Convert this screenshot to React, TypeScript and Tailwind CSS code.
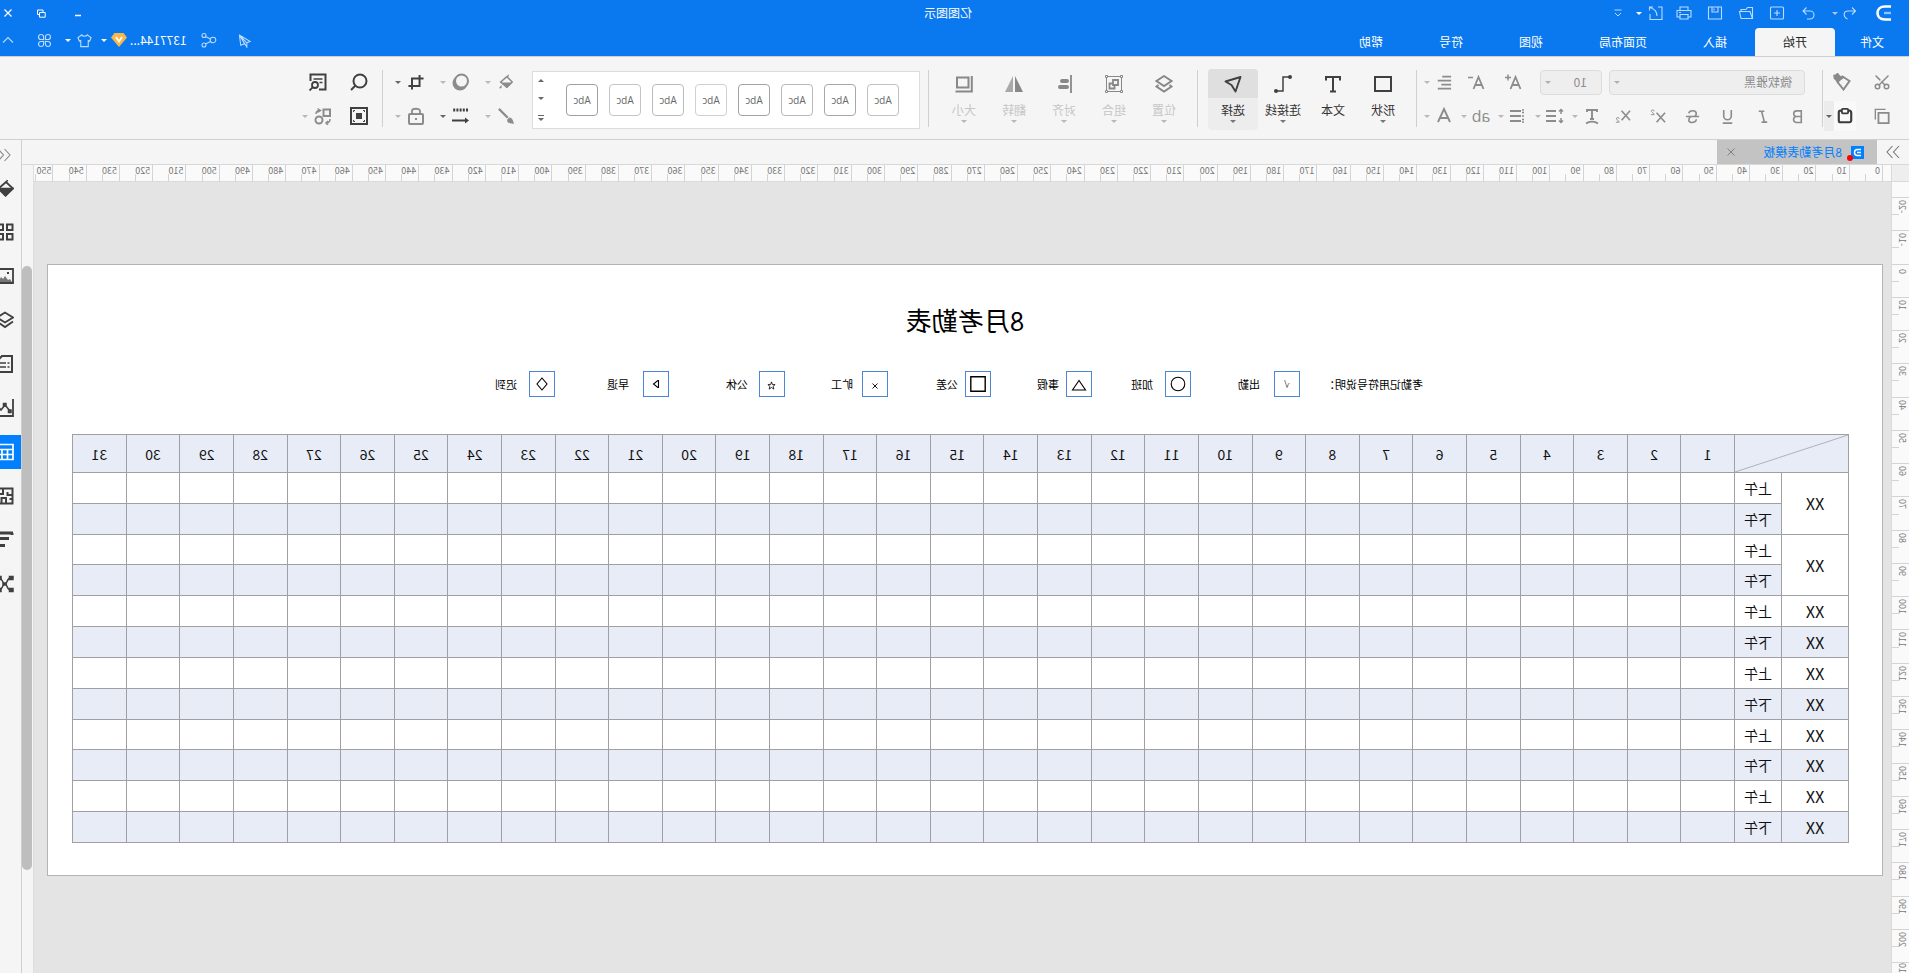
import type { ReactNode } from 'react';
import { Scissors } from 'lucide-react';

interface IconProps {
  children: ReactNode;
  className?: string;
  box?: number;
}

function Icon({ children, className = 'size-[18px]', box = 18 }: IconProps) {
  return (
    <svg
      viewBox={`0 0 ${box} ${box}`}
      className={`shrink-0 ${className}`}
      fill="none"
      stroke="currentColor"
      strokeWidth="1.5"
      aria-hidden="true"
    >
      {children}
    </svg>
  );
}

function Caret({ className = 'w-2 text-[#b4b4b4]', up = false }: { className?: string; up?: boolean }) {
  return (
    <span className={`flex shrink-0 items-center justify-center ${className}`}>
      <svg viewBox="0 0 6 3" className="h-[3px] w-[6px]" fill="currentColor" aria-hidden="true">
        <path d={up ? 'M0 3h6L3 0z' : 'M0 0h6L3 3z'} />
      </svg>
    </span>
  );
}

function ToolButton({ label, className, children }: { label: string; className: string; children: ReactNode }) {
  return (
    <button type="button" aria-label={label} className={`flex shrink-0 items-center justify-center ${className}`}>
      {children}
    </button>
  );
}

function Separator({ className = '' }: { className?: string }) {
  return <div className={`mt-[5px] h-[57px] w-px shrink-0 bg-[#cfcfcf] ${className}`} />;
}

/* ---------- Title bar ---------- */

const quickActions = [
  { label: '重做', icon: <path d="M9.5 2.500 13 6l-3.500 3.500M13 6H6a4 4 0 0 0 0 8h3" /> },
  { label: '新建', icon: <><rect x="1.500" y="2" width="13" height="12" rx="1" /><path d="M8 5v6M5 8h6" /></> },
  { label: '打开', icon: <><path d="M1.500 13.500v-11h5l1.500 2h5v2" /><path d="M1.500 13.500h11.500l1.500-7H4z" /></> },
  { label: '保存', icon: <><path d="M1.500 2h13v12h-13z" /><path d="M5 2v5h6V2M9 3.500v2" /></> },
  { label: '打印', icon: <><path d="M4 5V2h8v3M4 12H1V5.500h14V12h-3" /><path d="M4 9.500h8V14H4zM11 7.500h2" /></> },
];

function TitleBar() {
  return (
    <div className="flex h-7 items-center pb-0.5 text-xs">
      <div className="flex flex-1 items-center pl-[17px] text-[#b9dbff]">
        <svg viewBox="0 0 16 16" className="size-4" fill="none" aria-hidden="true">
          <path d="M1 1.500h6c10 0 10 13 0 13H1" stroke="#fff" strokeWidth="2.600" />
          <path d="M1 8h7" stroke="#8cc4ff" strokeWidth="2.400" />
        </svg>
        <ToolButton label="撤销" className="ml-[15px] w-[22px]">
          <Icon box={16} className="size-4">
            <g strokeWidth="1.100"><path d="M6 2.500 2.500 6 6 9.500M2.500 6h7.500c5 0 5 6 .5 8" /></g>
          </Icon>
        </ToolButton>
        <Caret className="mr-[7px] w-2 text-[#b8c4d0]" />
        {quickActions.map((action) => (
          <ToolButton key={action.label} label={action.label} className="w-[31px]">
            <Icon box={16} className="size-4"><g strokeWidth="1.100">{action.icon}</g></Icon>
          </ToolButton>
        ))}
        <ToolButton label="导出" className="w-[26px]">
          <Icon box={16} className="size-4">
            <g strokeWidth="1.100"><path d="M6 2H2v12.500h12V9" /><path d="M11 2h3.500v3.500M14 2.500C9 4 7 7 7 11" /></g>
          </Icon>
        </ToolButton>
        <Caret className="w-2 text-white" />
        <ToolButton label="更多" className="ml-2 w-[18px]">
          <Icon box={8} className="size-2"><g strokeWidth="1"><path d="M.5 1h7M1 4l3 3 3-3" /></g></Icon>
        </ToolButton>
      </div>
      <h1 className="pr-1 text-white">亿图图示</h1>
      <div className="flex flex-1 items-center justify-end text-white">
        <ToolButton label="最小化" className="w-9"><Icon box={8} className="size-2"><path d="M1 6.500h6" /></Icon></ToolButton>
        <ToolButton label="还原" className="w-9">
          <Icon box={9} className="size-[9px]"><path d="M3 3V1h5.500v4.500h-2M.8 3.500h5.700v4.700H.8z" strokeWidth="1" /></Icon>
        </ToolButton>
        <ToolButton label="关闭" className="ml-2 w-4"><Icon box={8} className="size-2"><path d="m.5.5 7 7M7.500.5l-7 7" strokeWidth="1.200" /></Icon></ToolButton>
      </div>
    </div>
  );
}

const menuTabs = ['插入', '页面布局', '视图', '符号', '帮助'];

function MenuBar() {
  return (
    <nav className="flex h-7 text-xs text-white">
      <button type="button" className="w-[74px]">文件</button>
      <button type="button" className="rounded-t-sm bg-[#f5f5f5] px-7 text-[#222]">开始</button>
      {menuTabs.map((tab) => (
        <button key={tab} type="button" className="px-7">{tab}</button>
      ))}
      <div className="ml-auto flex items-center pb-1 text-[#b9dbff]">
        <ToolButton label="发送" className="mr-4 w-5">
          <Icon box={16} className="size-[15px]"><g strokeWidth="1.100"><path d="M13.500 2 2 9l3.500 1.500zM13.500 2 12 13l-4-1.500zM5.500 10.500V15L13.500 2" /></g></Icon>
        </ToolButton>
        <ToolButton label="分享" className="mr-3 w-5">
          <Icon box={16} className="size-4">
            <g strokeWidth="1.100"><circle cx="4" cy="8" r="2.800" /><circle cx="13" cy="3.500" r="2" /><circle cx="13" cy="13" r="2" /><path d="m6.500 7 5-2.500M6.500 9.500l5 2.500" /></g>
          </Icon>
        </ToolButton>
        <button type="button" className="mr-[3px] text-white">1377144...</button>
        <svg viewBox="0 0 16 14" className="mr-[3px] h-3.5 w-4" aria-hidden="true">
          <path d="M3.500 0h9L16 4.500 8 14 0 4.500z" fill="#f9b84a" />
          <path d="m5 4 3 4.500L11 4" fill="none" stroke="#fff" strokeWidth="1.800" />
        </svg>
        <Caret className="mr-[5px] w-2 text-white" />
        <ToolButton label="皮肤" className="mr-[3px] w-5">
          <Icon box={16} className="size-[15px]"><g strokeWidth="1.200"><path d="M5 2 1 5l1.500 3.500L4 8v6.500h8V8l1.500.5L15 5l-4-3c-1 2-5 2-6 0z" /></g></Icon>
        </ToolButton>
        <Caret className="mr-[9px] w-2 text-white" />
        <ToolButton label="应用" className="mr-[19px] w-5">
          <Icon box={16} className="size-[15px]">
            <g strokeWidth="1.200">
              <path d="M7 7V4a2.700 2.700 0 1 0-2.700 3zM9 7V4a2.700 2.700 0 1 1 2.700 3zM7 9v3a2.700 2.700 0 1 1-2.700-3zM9 9v3a2.700 2.700 0 1 0 2.700-3z" />
            </g>
          </Icon>
        </ToolButton>
        <ToolButton label="收起" className="w-4"><Icon box={12} className="size-3"><g strokeWidth="1.100"><path d="m1 8.500 5-5 5 5" /></g></Icon></ToolButton>
      </div>
    </nav>
  );
}

/* ---------- Ribbon ---------- */

const textTools = [
  { label: '粗体', icon: <path d="M5 3h5a3 3 0 0 1 0 6H5zM5 9h5.500a3.200 3.200 0 0 1 0 6.300H5z" /> },
  { label: '斜体', icon: <path d="M7 3.500h6M4 15h6M10 3.500 7 15" /> },
  { label: '下划线', icon: <path d="M5 2v6.500a4 4 0 0 0 8 0V2M4 16h10" /> },
  { label: '删除线', icon: <path d="M13 5.500C12 2 5 2 5 6c0 1.500 1 2.500 2 3M2 9h14M5 12c0 4 8 4.500 8 1 0-2-1-3-2-4" /> },
  { label: '上标', icon: <><path d="m1 5 9 10M10 5 1 15" /><path d="M12.500 3.500c0-2 3-2 3 0 0 1-3 2-3 3.500h3.500" strokeWidth="1" /></> },
  { label: '下标', icon: <><path d="m1 3 9 10M10 3 1 13" /><path d="M12.500 11.500c0-2 3-2 3 0 0 1-3 2-3 3.500h3.500" strokeWidth="1" /></> },
];

const splitTextTools = [
  { label: '文字效果', icon: <><path d="M4 5V3h10v2M9 3v9M7 12h4" strokeWidth="1.900" /><path d="M3 16.500c3-2.500 9-2.500 12 0" strokeWidth="1.800" /></> },
  { label: '行距', icon: <><path d="M8 4h10M8 9h10M8 14h10" strokeWidth="2" /><path d="M3 2v5M3 11v5M1 4.500 3 2.500l2 2M1 13.500l2 2 2-2" /></> },
  { label: '项目符号', icon: <><path d="M6 4h11M6 9h11M6 14h11" strokeWidth="2" /><path d="M3 3h2M3 5.500h2M3 9h2M3 12.500h2M3 15h2" /></> },
];

function Split({ label, children, dark = false, wide = false }: { label: string; children: ReactNode; dark?: boolean; wide?: boolean }) {
  return (
    <div className={`flex shrink-0 items-center ${wide ? 'h-[34px]' : 'mr-[3px] h-[34px]'} ${dark ? 'text-[#404040]' : 'text-[#8c8c8c]'}`}>
      <ToolButton label={label} className={wide ? 'w-7' : 'w-[26px]'}>{children}</ToolButton>
      <Caret className={dark ? 'w-2 text-[#666]' : 'w-2 text-[#b8b8b8]'} />
    </div>
  );
}

function ClipboardGroup() {
  return (
    <div className="shrink-0 text-[#8a8a8a]">
      <div className="flex h-[34px] items-center pl-2">
        <ToolButton label="剪切" className="w-[38px]"><Scissors className="size-[18px] -rotate-90" /></ToolButton>
        <ToolButton label="格式刷" className="ml-1.5 w-[30px]">
          <Icon>
            <path d="m1.500 8 7-4.500 5 5.500-6 7.500z" strokeWidth="2" />
            <path d="m8.500 5 3.500-2.500 1.500-2 1.500 1.500 2 .5-.5 3-3 3z" fill="currentColor" />
          </Icon>
        </ToolButton>
      </div>
      <div className="flex h-[34px] items-center pl-2">
        <ToolButton label="复制" className="w-[38px]">
          <Icon className="size-4"><path d="M1.500 5.500H13V17H1.500z" strokeWidth="2" /><path d="M5 1.500h11.500V13" /></Icon>
        </ToolButton>
        <div className="ml-[7px] flex h-[30px] w-8 items-stretch bg-[#f9f9f9] text-[#3c3c3c]">
          <ToolButton label="粘贴" className="w-[22px]">
            <Icon className="size-4"><rect x="2" y="3" width="14" height="13" rx="2" strokeWidth="2.400" /><rect x="5.500" y="1" width="7" height="5" rx="1" fill="#f9f9f9" strokeWidth="2" /></Icon>
          </ToolButton>
          <Caret className="w-[10px] bg-[#ececec] text-[#666]" />
        </div>
      </div>
    </div>
  );
}

function FontGroup() {
  return (
    <div className="ml-[17px] shrink-0 text-[#8c8c8c]">
      <div className="flex h-[34px] items-center">
        <div className="relative">
          <select aria-label="字体" className="block h-[25px] w-[196px] appearance-none rounded-sm border border-[#dcdcdc] bg-[#eee] pl-3 text-xs text-[#8c8c8c]">
            <option>微软雅黑</option>
          </select>
          <Caret className="pointer-events-none absolute inset-y-0 right-1 w-2 text-[#b0b0b0]" />
        </div>
        <div className="relative ml-[7px]">
          <select aria-label="字号" className="block h-[25px] w-[62px] appearance-none rounded-sm border border-[#dcdcdc] bg-[#eee] pl-3.5 text-xs text-[#8c8c8c]">
            <option>10</option>
          </select>
          <Caret className="pointer-events-none absolute inset-y-0 right-1 w-2 text-[#b0b0b0]" />
        </div>
        <ToolButton label="增大字号" className="ml-[9px] w-9">
          <Icon><path d="m1.500 16 5-12 5 12M3.500 12h6" strokeWidth="1.800" /><path d="M11 4.500h6M14 1.500v6" /></Icon>
        </ToolButton>
        <ToolButton label="减小字号" className="w-[38px]">
          <Icon><path d="m1.500 16 5-12 5 12M3.500 12h6" strokeWidth="1.800" /><path d="M12 4.500h5" /></Icon>
        </ToolButton>
        <Split label="对齐方式">
          <Icon className="size-4"><path d="M1 3h10M1 7.500h15M1 12h11M1 16.500h15" strokeWidth="2" /></Icon>
        </Split>
      </div>
      <div className="-ml-[10px] flex h-[34px] items-center">
        {textTools.map((tool) => (
          <ToolButton key={tool.label} label={tool.label} className="w-[35px]">
            <Icon className="size-[17px]"><g strokeWidth="1.700">{tool.icon}</g></Icon>
          </ToolButton>
        ))}
        {splitTextTools.map((tool) => (
          <Split key={tool.label} label={tool.label}><Icon>{tool.icon}</Icon></Split>
        ))}
        <Split label="突出显示"><span className="font-['Open_Sans'] text-base">ab</span></Split>
        <Split label="字体颜色"><Icon><path d="m3 15 6-13 6 13M5.500 11h7" strokeWidth="1.900" /></Icon></Split>
      </div>
    </div>
  );
}

interface BigTool {
  label: string;
  icon: ReactNode;
  caret?: boolean;
  active?: boolean;
}

const drawTools: BigTool[] = [
  { label: '形状', caret: true, icon: <path d="M1 2h16v14H1z" strokeWidth="2" /> },
  { label: '文本', icon: <path d="M2 5.500V2h14v3.500M9 2v14M6 16.500h6" strokeWidth="2" /> },
  {
    label: '连接线',
    caret: true,
    icon: <><path d="M2 2h7v14h6" strokeWidth="1.500" /><circle cx="2" cy="2" r="2" fill="currentColor" stroke="none" /><circle cx="16" cy="16" r="2" fill="currentColor" stroke="none" /></>,
  },
  { label: '选择', caret: true, active: true, icon: <path d="m1.500 2 15 4.500-6 3.500-4 6.500z" strokeWidth="1.900" strokeLinejoin="round" /> },
];

const arrangeTools: BigTool[] = [
  { label: '位置', icon: <path d="m9 1 7.500 5L9 11 1.500 6zM3.500 10l-2 1.500L9 16.500l7.500-5-2-1.500" strokeWidth="1.900" /> },
  {
    label: '组合',
    icon: <><path d="M1.500 1.500h15v15h-15z" strokeWidth="1" /><path d="M5 5h5v5H5zM10.500 8.500h3v5h-5V11" strokeWidth="1.800" /><path d="M.5.5h2v2h-2zM15.500.5h2v2h-2zM.5 15.500h2v2h-2zM15.500 15.500h2v2h-2z" fill="#f5f5f5" strokeWidth="1" /></>,
  },
  { label: '对齐', icon: <><path d="M2 0v18" strokeWidth="1.800" /><path d="M6 6h5M6 12h7" strokeWidth="4" strokeLinecap="round" /></> },
  { label: '翻转', icon: <><path d="M8 1v16H0z" fill="currentColor" stroke="none" /><path d="M10 1v16h8z" fill="#a9a9a9" stroke="none" /></> },
  { label: '大小', icon: <path d="M4.500 2.500h11.500v10H4.500zM1.200 1v15.500h16.300" strokeWidth="2" /> },
];

function BigButton({ tool, muted = false }: { tool: BigTool; muted?: boolean }) {
  return (
    <button
      type="button"
      className={`mt-1 flex h-[61px] w-[50px] shrink-0 flex-col items-center text-xs ${muted ? 'text-[#c6c6c6]' : 'text-[#333]'} ${tool.active ? 'rounded-sm bg-[#ededed]' : ''}`}
    >
      <span
        className={`flex h-[29px] w-full items-center justify-center ${muted ? 'text-[#888]' : 'text-[#404040]'} ${tool.active ? 'rounded-t-sm bg-[#dfdfdf]' : ''}`}
      >
        <Icon>{tool.icon}</Icon>
      </span>
      <span className="mt-1 leading-4">{tool.label}</span>
      {tool.caret || muted ? <Caret className={muted ? 'h-1.5 w-2 text-[#b8b8b8]' : 'h-1.5 w-2 text-[#777]'} /> : null}
    </button>
  );
}

const themeStyles = [
  'border-[#c0c0c0]',
  'border-[#a8a8a8]',
  'border-[#b8b8b8]',
  'border-[#a4a4a4]',
  'border-[#d0d0d0]',
  'border-[#bcbcbc]',
  'border-[#c4c4c4]',
  'border-[#a0a0a0]',
];

function ThemeGallery() {
  return (
    <div className="ml-2 mt-1.5 flex h-[58px] w-[388px] shrink-0 items-center justify-between border border-[#dcdcdc] bg-white pl-5">
      <div className="flex gap-[11px]">
        {themeStyles.map((border, index) => (
          <button key={index} type="button" className={`size-8 rounded border bg-white font-['Open_Sans'] text-[10px] text-[#666] ${border}`}>
            Abc
          </button>
        ))}
      </div>
      <div className="flex h-full w-4 flex-col items-center justify-around text-[#666]">
        <Caret up className="w-2" />
        <Caret className="w-2" />
        <Icon box={6} className="size-1.5"><path d="M0 .5h6" strokeWidth="1" /><path d="M0 3h6L3 6z" fill="currentColor" stroke="none" /></Icon>
      </div>
    </div>
  );
}

function StyleGroup() {
  return (
    <div className="ml-3 shrink-0">
      <div className="flex gap-[9px]">
        <Split wide label="填充">
          <Icon className="size-4"><path d="m8 3 7 6-7 6-6-6z" strokeWidth="1.700" /><path d="M2 9.500h13l-7 6.500zM14 12l3 4h-3z" fill="currentColor" stroke="none" /><path d="m8 4-2-3" /></Icon>
        </Split>
        <Split wide label="阴影">
          <Icon><circle cx="10" cy="10" r="7.500" fill="currentColor" stroke="none" /><circle cx="8.500" cy="8" r="6.500" fill="#f5f5f5" strokeWidth="2" /></Icon>
        </Split>
        <Split wide dark label="裁剪">
          <Icon className="size-4"><path d="M5 1v12.500h12.500M.5 5h13v12.500" strokeWidth="2.200" /></Icon>
        </Split>
      </div>
      <div className="flex gap-[9px]">
        <Split wide label="线条">
          <Icon className="size-4"><path d="m17 1-10 10" strokeWidth="2.500" /><path d="M1 17c1-3 1-5 4-5.500l2 2C7 16 4 17 1 17z" fill="currentColor" /></Icon>
        </Split>
        <Split wide dark label="线型">
          <Icon><path d="M2 3h15" strokeWidth="3" strokeDasharray="2 1.200" /><path d="M3 13.500h15" strokeWidth="2" /><path d="m5 10.500-4 3 4 3z" fill="currentColor" stroke="none" /></Icon>
        </Split>
        <Split wide label="锁定">
          <Icon><rect x="2" y="7" width="14" height="10" rx="1" strokeWidth="2" /><path d="M5 7V4c0-3 8-3 8 0v3" strokeWidth="1.800" /><path d="M8 12h2" strokeWidth="2" /></Icon>
        </Split>
      </div>
    </div>
  );
}

function SearchGroup() {
  return (
    <div className="ml-[9px] shrink-0 text-[#404040]">
      <div className="flex h-[34px] items-center">
        <ToolButton label="查找" className="w-7">
          <Icon><circle cx="8" cy="8" r="6.500" strokeWidth="2" /><path d="m12.500 12.500 4.500 4.500" strokeWidth="2" /></Icon>
        </ToolButton>
        <ToolButton label="查找替换" className="ml-[13px] w-7">
          <Icon><path d="M8 16.500H1.500v-15h15V8" strokeWidth="2" /><path d="M4.500 6h9M4.500 9.500h3" strokeWidth="1.600" /><circle cx="12" cy="12" r="3" strokeWidth="1.800" /><path d="m14 14 3.500 3.500" strokeWidth="1.800" /></Icon>
        </ToolButton>
      </div>
      <div className="flex h-[34px] items-center">
        <ToolButton label="适应" className="w-7">
          <Icon><path d="M1 1h16v16H1z" strokeWidth="2" /><path d="M6 6h6v6H6z" fill="currentColor" stroke="none" /><path d="M3.500 5V3.500H5M13 3.500h1.500V5M3.500 13v1.500H5M13 14.500h1.500V13" strokeWidth="1" /></Icon>
        </ToolButton>
        <div className="ml-2 flex">
          <Split wide label="替换形状">
            <Icon><path d="M2 2.500h6.500V9H2z" strokeWidth="2" /><circle cx="13" cy="13" r="3.500" strokeWidth="2" /><path d="M12 3.500c3 0 4 1 4 3.500M14.500 1.500l-3 2 3 2M2 12c0 3 1 4 4 4M4 14l2 2-2 2" /></Icon>
          </Split>
        </div>
      </div>
    </div>
  );
}

function Ribbon() {
  return (
    <div className="flex h-[84px] shrink-0 overflow-hidden border-b border-t border-[#d0d0d0] pt-2">
      <ClipboardGroup />
      <Separator className="ml-px" />
      <FontGroup />
      <Separator className="ml-[3px]" />
      <div className="ml-2 flex">
        {drawTools.map((tool) => <BigButton key={tool.label} tool={tool} />)}
      </div>
      <Separator className="ml-[10px]" />
      <div className="ml-2 flex">
        {arrangeTools.map((tool) => <BigButton key={tool.label} tool={tool} muted />)}
      </div>
      <Separator className="ml-[10px]" />
      <ThemeGallery />
      <StyleGroup />
      <Separator className="ml-[11px]" />
      <SearchGroup />
    </div>
  );
}

/* ---------- Document ---------- */

function DocumentTabs() {
  return (
    <div className="flex h-[25px] shrink-0 border-b border-[#d8d8d8] text-[#777]">
      <ToolButton label="展开" className="w-8">
        <Icon box={14} className="size-3.5"><g strokeWidth="1.100"><path d="m1 1 5.500 6L1 13M7.500 1l5.500 6-5.500 6" /></g></Icon>
      </ToolButton>
      <div className="flex w-[160px] items-center bg-[#c3c3c3] pl-[13px] text-xs">
        <span className="relative mr-[9px] size-[13px] shrink-0 bg-[#0080ff]">
          <svg viewBox="0 0 13 13" className="size-[13px]" fill="none" stroke="#fff" strokeWidth="1.500" aria-hidden="true">
            <path d="M3 3.500h3.500c4 0 4 6 0 6H3M3 6.500h4" />
          </svg>
          <span className="absolute -bottom-0.5 -right-1 size-1.5 rounded-full bg-[#ff0000]" />
        </span>
        <span className="whitespace-nowrap text-[#0080ff]">8月考勤表模板</span>
        <ToolButton label="关闭标签" className="ml-auto mr-[9px] w-[10px] text-[#777]">
          <Icon box={8} className="size-2"><g strokeWidth=".9"><path d="m.5.5 7 7M7.500.5l-7 7" /></g></Icon>
        </ToolButton>
      </div>
    </div>
  );
}

const horizontalMarks = Array.from({ length: 55 }, (_, i) => i * 10);
const verticalMarks = Array.from({ length: 23 }, (_, i) => (i - 2) * 10);

function HorizontalRuler() {
  return (
    <div className="flex h-[17px] shrink-0 border-b border-[#dadada] text-[9px] leading-3 text-[#777]">
      <div className="w-[17px] shrink-0 bg-[#eee]" />
      <div className="w-[9px] shrink-0 border-l border-[#dadada] bg-[#fafafa]" />
      {horizontalMarks.map((mark) => (
        <div key={mark} className="flex min-w-0 flex-1 items-end border-l border-[#d4d4d4] bg-[#fafafa]">
          <span className="w-1/2 self-start whitespace-nowrap pl-0.5">{mark}</span>
          <span className="h-[7px] w-px bg-[#d4d4d4]" />
        </div>
      ))}
      <div className="flex w-[19px] shrink-0 items-end border-l border-[#d4d4d4] bg-[#fafafa]">
        <span className="w-4 self-start pl-px">550</span>
        <span className="h-[7px] w-px bg-[#d4d4d4]" />
      </div>
    </div>
  );
}

function VerticalRuler() {
  return (
    <div className="flex w-[18px] shrink-0 flex-col border-r border-[#dadada] bg-[#fafafa] text-[9px] leading-3 text-[#777]">
      <div className="h-[15px] shrink-0" />
      {verticalMarks.map((mark) => (
        <div key={mark} className="flex min-h-0 flex-1 flex-col items-end border-t border-[#d4d4d4]">
          <span className="h-1/2 w-full">
            <span className="ml-px inline-block w-3 rotate-180 whitespace-nowrap pb-0.5 [writing-mode:vertical-rl]">{mark}</span>
          </span>
          <span className="h-px w-[7px] bg-[#d4d4d4]" />
        </div>
      ))}
      <div className="h-[11px] shrink-0 overflow-hidden border-t border-[#d4d4d4]">
        <span className="ml-px inline-block w-3 rotate-180 whitespace-nowrap [writing-mode:vertical-rl]">210</span>
      </div>
    </div>
  );
}

const legend: { name: string; itemGap: string; labelGap: string; symbol: ReactNode }[] = [
  { name: '出勤', itemGap: 'ml-[27px]', labelGap: 'ml-[14px]', symbol: <span className="font-['Liberation_Sans'] text-[10px] text-[#333]">√</span> },
  { name: '加班', itemGap: 'ml-[47px]', labelGap: 'ml-[12px]', symbol: <Icon box={16} className="size-4"><circle cx="8" cy="8" r="6.800" strokeWidth="1.100" /></Icon> },
  { name: '事假', itemGap: 'ml-[39px]', labelGap: 'ml-[7px]', symbol: <Icon box={16} className="mt-0.5 size-4"><path d="M8 3.500 14.500 13h-13z" strokeWidth="1.100" /></Icon> },
  { name: '公差', itemGap: 'ml-[46px]', labelGap: 'ml-[7px]', symbol: <Icon box={16} className="size-4"><path d="M.8.8h14.400v14.400H.8z" strokeWidth="1.400" /></Icon> },
  { name: '旷工', itemGap: 'ml-[48px]', labelGap: 'ml-[9px]', symbol: <Icon box={6} className="mt-1 size-1.5"><path d="m.5.5 5 5M5.500.5l-5 5" strokeWidth=".9" /></Icon> },
  { name: '公休', itemGap: 'ml-[46px]', labelGap: 'ml-[11px]', symbol: <Icon box={10} className="mt-0.5 size-[9px]"><path d="m5 1 1 3h3L6.800 6l.8 3L5 7.200 2.400 9l.8-3L1 4h3z" strokeWidth=".9" /></Icon> },
  { name: '早退', itemGap: 'ml-[57px]', labelGap: 'ml-[14px]', symbol: <Icon box={8} className="size-2"><path d="M1.500 0v8L6.500 4z" strokeWidth="1.100" /></Icon> },
  { name: '迟到', itemGap: 'ml-[52px]', labelGap: 'ml-[12px]', symbol: <Icon box={14} className="size-3.5"><path d="m7 1 5 6-5 6-5-6z" strokeWidth="1.100" /></Icon> },
];

function Legend() {
  return (
    <div className="mt-[33px] flex h-[26px] items-center pl-[459px] text-[11px] text-black">
      <span className="w-24 whitespace-nowrap">考勤记用符号说明：</span>
      {legend.map((item) => (
        <div key={item.name} className={`flex shrink-0 items-center ${item.itemGap}`}>
          <span className="flex h-[26px] w-[26px] items-center justify-center border border-[#4a86d8]">{item.symbol}</span>
          <span className={item.labelGap}>{item.name}</span>
        </div>
      ))}
    </div>
  );
}

const days = Array.from({ length: 31 }, (_, i) => i + 1);

// nameSpan 0 means the name cell is covered by the row above
const rows = [
  { period: '上午', nameSpan: 2 },
  { period: '下午', nameSpan: 0 },
  { period: '上午', nameSpan: 2 },
  { period: '下午', nameSpan: 0 },
  { period: '上午', nameSpan: 1 },
  { period: '下午', nameSpan: 1 },
  { period: '上午', nameSpan: 1 },
  { period: '下午', nameSpan: 1 },
  { period: '上午', nameSpan: 1 },
  { period: '下午', nameSpan: 1 },
  { period: '上午', nameSpan: 1 },
  { period: '下午', nameSpan: 1 },
];

function AttendanceTable() {
  return (
    <table className="h-[409px] w-full table-fixed border-collapse text-center text-sm leading-4 text-[#111]">
      <colgroup>
        <col className="w-[67px]" />
        <col className="w-[47px]" />
        {days.map((day) => <col key={day} />)}
      </colgroup>
      <thead>
        <tr className="h-[38px] bg-[#e8ecf7]">
          <th colSpan={2} aria-label="姓名 / 日期" className="border border-[#a0a0a4] p-0">
            <svg viewBox="0 0 113 37" preserveAspectRatio="none" className="block h-[37px] w-full" aria-hidden="true">
              <path d="M0 0l113 37" stroke="#b0b0b8" strokeWidth="1" />
            </svg>
          </th>
          {days.map((day) => (
            <th key={day} className="border border-[#a0a0a4] p-0 font-normal">{day}</th>
          ))}
        </tr>
      </thead>
      <tbody>
        {rows.map((row, index) => (
          <tr key={index} className={index % 2 ? 'bg-[#e8ecf7]' : 'bg-white'}>
            {row.nameSpan > 0 && (
              <td rowSpan={row.nameSpan} className="border border-[#a0a0a4] p-0 text-base leading-4">XX</td>
            )}
            <td className="border border-[#a0a0a4] p-0">{row.period}</td>
            {days.map((day) => <td key={day} className="border border-[#a0a0a4] p-0" />)}
          </tr>
        ))}
      </tbody>
    </table>
  );
}

function Canvas() {
  return (
    <main className="min-w-0 flex-1 overflow-hidden bg-[#e4e4e4] pl-2 pr-[13px] pt-[82px]">
      <div className="border border-[#b4b4b4] bg-white pb-[32px] pt-[37px]">
        <h2 className="text-center text-[26px] leading-9 text-black">8月考勤表</h2>
        <Legend />
        <div className="mt-[37px] pl-[33px] pr-6">
          <AttendanceTable />
        </div>
      </div>
    </main>
  );
}

/* ---------- Side panel ---------- */

const panels: { label: string; icon: ReactNode; active?: boolean }[] = [
  { label: '样式', icon: <><path d="m8 3 7.500 6.500L8 16 1 9.500z" strokeWidth="1.800" /><path d="M1 9.500h15L8.500 17zM8 4 6.500 1" fill="currentColor" /></> },
  { label: '符号库', icon: <path d="M1.500 1.500h5.500V7H1.500zM11 1.500h5.500V7H11zM1.500 11h5.500v5.500H1.500zM11 11h5.500v5.500H11z" strokeWidth="2" /> },
  { label: '图片', icon: <><path d="M1 2h16v14H1z" strokeWidth="1.800" /><path d="m2 15 2-3 2 1 3-4 2 3 2-2 3 5z" fill="#777" stroke="none" /><path d="M5 6h2" strokeWidth="2" /></> },
  { label: '图层', icon: <path d="m9 1.500 8 5-8 5-8-5zM1 10.500l8 5.500 8-5.500" strokeWidth="1.900" /> },
  { label: '注释', icon: <><path d="M2 1h10l4 4v12H2z" strokeWidth="2" /><path d="M4.500 8h2M8 8h6M4.500 12h2M8 12h6" strokeWidth="1.600" /></> },
  { label: '图表', icon: <><path d="M1 0v17h16" strokeWidth="1.800" /><path d="m4 12 5-6 4 5 4-5" strokeWidth="1.600" /><path d="M3 11h2.500v2.500H3zM8 4.500h2.500V7H8z" fill="currentColor" /></> },
  { label: '表格', active: true, icon: <path d="M1 1.500h16v15H1zM1 6.500h16M1 11.500h16M6.500 6.500v10M12 6.500v10" strokeWidth="1.700" /> },
  { label: '平面图', icon: <path d="M1.500 1.500H17v15H1.500zM1.500 8h5V5M1.500 12h3M8 16v-5h4.500v5M11 1.500V7h6" strokeWidth="2" /> },
  { label: '甘特图', icon: <path d="M1 2h16M2 2v2M5 7.500h9M9 14.500h8" strokeWidth="3" /> },
  { label: '思维导图', icon: <><path d="M3 3c5 0 3 6 6 6s2-6 6-6M3 15c5 0 3-6 6-6s2 6 6 6" strokeWidth="1.500" /><path d="M1 1.500h3.500v3H1zM1 13.500h3.500v3H1zM13 1.500h4v3h-4zM13 13.500h4v3h-4zM8 8h3v2H8z" fill="currentColor" /></> },
];

function SidePanel() {
  return (
    <aside className="w-[22px] shrink-0 overflow-hidden border-l border-[#cfcfcf] text-[#404040]">
      <button type="button" aria-label="折叠" className="flex h-[26px] items-center pl-2.5 pt-1 text-[#888]">
        <Icon box={14} className="size-3.5"><g strokeWidth="1.100"><path d="M6.500 1 1 7l5.500 6M13 1 7.500 7l5.500 6" /></g></Icon>
      </button>
      <div className="flex flex-col gap-[10px] pt-[5px]">
        {panels.map((panel) => (
          <button
            key={panel.label}
            type="button"
            aria-label={panel.label}
            className={`flex h-[34px] w-full items-center pl-[7px] ${panel.active ? 'bg-[#0080ff] text-white' : ''}`}
          >
            <Icon>{panel.icon}</Icon>
          </button>
        ))}
      </div>
    </aside>
  );
}

export default function App() {
  return (
    <div className="flex h-screen -scale-x-100 flex-col overflow-hidden bg-[#f5f5f5] font-['Noto_Sans_CJK_SC',sans-serif]">
      <header className="shrink-0 bg-[#0a78ee]">
        <TitleBar />
        <MenuBar />
      </header>
      <Ribbon />
      <div className="flex min-h-0 flex-1">
        <div className="flex min-w-0 flex-1 flex-col">
          <DocumentTabs />
          <div className="flex min-h-0 flex-1">
            <div className="flex min-w-0 flex-1 flex-col">
              <HorizontalRuler />
              <div className="flex min-h-0 flex-1">
                <VerticalRuler />
                <Canvas />
              </div>
            </div>
            <div className="flex w-3 shrink-0 flex-col items-center border-l border-[#dedede] pb-[103px] pt-[101px]">
              <div className="w-[10px] flex-1 rounded-full bg-[#bebebe]" />
            </div>
          </div>
        </div>
        <SidePanel />
      </div>
    </div>
  );
}
